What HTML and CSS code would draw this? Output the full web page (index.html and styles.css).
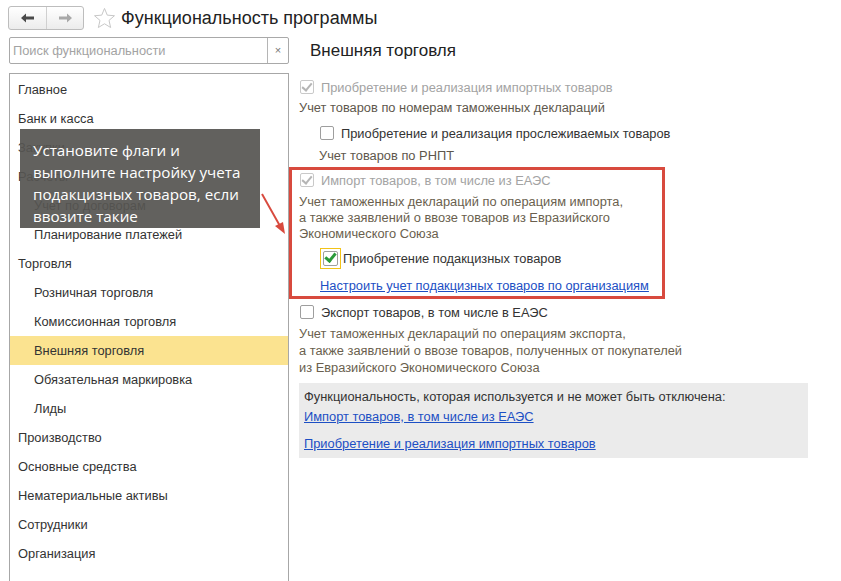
FILE: index.html
```html
<!DOCTYPE html>
<html lang="ru">
<head>
  <meta charset="UTF-8">
  <title>Функциональность программы</title>
  <link rel="stylesheet" href="styles.css">
</head>
<body>
  <div class="page">
    <header class="topbar">
      <div class="nav">
        <span class="nav-btn back">
          <svg viewBox="0 0 14 10" width="14" height="10"><path d="M0 5 L5 0.5 L5 3.5 L13 3.5 L13 6.5 L5 6.5 L5 9.5 Z" fill="#4a4a4a"/></svg>
        </span>
        <span class="nav-btn fwd">
          <svg viewBox="0 0 14 10" width="14" height="10"><path d="M14 5 L9 0.5 L9 3.5 L1 3.5 L1 6.5 L9 6.5 L9 9.5 Z" fill="#a8a8a8"/></svg>
        </span>
      </div>
      <svg class="star" viewBox="0 0 24 24" width="23" height="23"><path d="M12 1.5 L14.9 8.5 L22.4 9.1 L16.7 14 L18.4 21.4 L12 17.5 L5.6 21.4 L7.3 14 L1.6 9.1 L9.1 8.5 Z" fill="none" stroke="#c4c4c4" stroke-width="1"/></svg>
      <h1>Функциональность программы</h1>
    </header>

    <div class="main">
      <aside class="sidebar">
        <div class="search">
          <span class="placeholder">Поиск функциональности</span>
          <span class="clear">×</span>
        </div>
        <ul class="sections">
          <li>Главное</li>
          <li>Банк и касса</li>
          <li>Закупки</li>
          <li>Расчеты</li>
          <li class="sub">Учет по договорам</li>
          <li class="sub">Планирование платежей</li>
          <li>Торговля</li>
          <li class="sub">Розничная торговля</li>
          <li class="sub">Комиссионная торговля</li>
          <li class="sub active">Внешняя торговля</li>
          <li class="sub">Обязательная маркировка</li>
          <li class="sub">Лиды</li>
          <li>Производство</li>
          <li>Основные средства</li>
          <li>Нематериальные активы</li>
          <li>Сотрудники</li>
          <li>Организация</li>
        </ul>
        <div class="hint">Установите флаги и выполните настройку учета подакцизных товаров, если ввозите такие</div>
      </aside>

      <section class="content">
        <h2>Внешняя торговля</h2>

        <div class="opt first disabled">
          <span class="box checked"></span>
          <span>Приобретение и реализация импортных товаров</span>
        </div>
        <p class="note">Учет товаров по номерам таможенных деклараций</p>

        <div class="opt indent gap7">
          <span class="box"></span>
          <span>Приобретение и реализация прослеживаемых товаров</span>
        </div>
        <p class="note indent gap5">Учет товаров по РНПТ</p>

        <div class="marked">
          <div class="opt disabled">
            <span class="box checked"></span>
            <span>Импорт товаров, в том числе из ЕАЭС</span>
          </div>
          <p class="note lines">Учет таможенных деклараций по операциям импорта,<br>а также заявлений о ввозе товаров из Евразийского<br>Экономического Союза</p>
          <div class="opt indent focus-row">
            <span class="focus"><span class="box on"></span></span>
            <span>Приобретение подакцизных товаров</span>
          </div>
          <a class="link indent setup" href="#">Настроить учет подакцизных товаров по организациям</a>
        </div>

        <div class="opt export">
          <span class="box"></span>
          <span>Экспорт товаров, в том числе в ЕАЭС</span>
        </div>
        <p class="note lines tall">Учет таможенных деклараций по операциям экспорта,<br>а также заявлений о ввозе товаров, полученных от покупателей<br>из Евразийского Экономического Союза</p>

        <div class="fixed">
          <div>Функциональность, которая используется и не может быть отключена:</div>
          <a class="link" href="#">Импорт товаров, в том числе из ЕАЭС</a>
          <a class="link last" href="#">Приобретение и реализация импортных товаров</a>
        </div>
      </section>
    </div>

    <svg class="pointer" viewBox="0 0 40 50" width="40" height="50">
      <line x1="7" y1="8" x2="25" y2="40" stroke="#d84a3e" stroke-width="2"/>
      <path d="M30 48 L20 40 L28 36 Z" fill="#d84a3e"/>
    </svg>
  </div>
</body>
</html>
```

FILE: styles.css
```css
body {
  margin: 0;
  background: #fff;
  font-family: "Liberation Sans", Arial, sans-serif;
  font-size: 12.85px;
  color: #333;
}
.page {
  position: relative;
  width: 841px;
  height: 581px;
  overflow: hidden;
}

/* top bar */
.topbar {
  display: flex;
  align-items: center;
  padding: 6px 0 0 8px;
  height: 24px;
}
.nav {
  display: flex;
  height: 22px;
  border: 1px solid #bdbdbd;
  border-radius: 3px;
  background: linear-gradient(#ffffff, #ececec);
}
.nav-btn {
  width: 36px;
  display: flex;
  align-items: center;
  justify-content: center;
}
.nav-btn.back { border-right: 1px solid #d0d0d0; width: 37px; }
.star { margin-left: 9px; }
h1 {
  margin: 0 0 0 5px;
  font-size: 18px;
  font-weight: normal;
  color: #222;
}

/* columns */
.main {
  display: flex;
  margin-top: 7px;
}
.sidebar {
  position: relative;
  margin-left: 9px;
  width: 280px;
  flex: none;
}
.search {
  display: flex;
  height: 25px;
  border: 1px solid #a9a9a9;
  border-radius: 2px;
}
.placeholder {
  flex: 1;
  padding-left: 3px;
  line-height: 25px;
  color: #a3a3a3;
}
.clear {
  width: 20px;
  border-left: 1px solid #b5b5b5;
  text-align: center;
  line-height: 24px;
  font-size: 11px;
  color: #777;
}
.sections {
  list-style: none;
  margin: 9px 0 0;
  padding: 1px 0 0;
  height: 520px;
  border: 1px solid #a7a7a7;
  border-bottom: none;
}
.sections li {
  height: 29px;
  line-height: 29px;
  padding-left: 8px;
}
.sections li.sub { padding-left: 24px; }
.sections li.active { background: #fbe390; }

.hint {
  position: absolute;
  left: 11px;
  top: 92px;
  width: 227px;
  height: 89px;
  padding: 10px 0 0 13px;
  background: rgba(86, 85, 82, 0.93);
  color: #fff;
  font-family: "Open Sans", sans-serif;
  font-size: 15.2px;
  line-height: 22px;
}

/* right side */
.content {
  margin-left: 10px;
  flex: 1;
}
h2 {
  margin: 0;
  padding-left: 11px;
  height: 27px;
  line-height: 27px;
  font-size: 17px;
  font-weight: normal;
  color: #222;
}
.opt {
  display: flex;
  align-items: center;
  height: 20px;
  gap: 7px;
  padding-left: 1px;
}
.opt.first { margin-top: 13px; }
.opt.disabled { color: #a3a3a3; }
.opt.indent { padding-left: 21px; }
.gap7 { margin-top: 7px; }
.box {
  width: 12px;
  height: 12px;
  border: 1px solid #9e9e9e;
  border-radius: 2px;
  background: #fff;
  position: relative;
  flex: none;
}
.disabled .box { border-color: #c9c9c9; }
.box.checked::after,
.box.on::after {
  content: "";
  position: absolute;
  left: 3px;
  top: 0;
  width: 4px;
  height: 8px;
  border: solid #b5b5b5;
  border-width: 0 2px 2px 0;
  transform: rotate(40deg);
}
.box.on::after { border-color: #2a9a3a; border-width: 0 3px 3px 0; left: 3px; top: -1px; }
.note {
  margin: 3px 0 0;
  line-height: 16px;
  color: #5e574c;
}
.note.indent { padding-left: 20px; }
.gap5 { margin-top: 5px; }
.note.lines { margin-top: 4px; color: #6a5f4e; }
.note.tall { line-height: 17px; margin-top: 3px; }

.marked {
  margin: 3px 0 0 -10px;
  padding: 0 0 2px 7px;
  width: 363px;
  border: 3px solid #d84a3e;
}
.focus-row { margin-top: 6px; height: 21px; padding-left: 18px; gap: 2px; }
.focus {
  display: flex;
  align-items: center;
  justify-content: center;
  width: 19px;
  height: 19px;
  border: 1px solid #f2c318;
}
.box.on { width: 13px; height: 13px; }
.link {
  display: block;
  color: #1c4fc4;
  text-decoration: underline;
  line-height: 16px;
}
.link.indent { padding-left: 21px; }
.setup { margin-top: 9px; }

.export { margin-top: 3px; }

.fixed {
  margin-top: 7px;
  width: 504px;
  padding: 6px 0 6px 5px;
  background: #ebebeb;
  line-height: 16px;
  color: #333;
}
.fixed .link { margin-top: 4px; }
.fixed .link.last { margin-top: 11px; }

.pointer {
  position: absolute;
  left: 255px;
  top: 186px;
}
```
